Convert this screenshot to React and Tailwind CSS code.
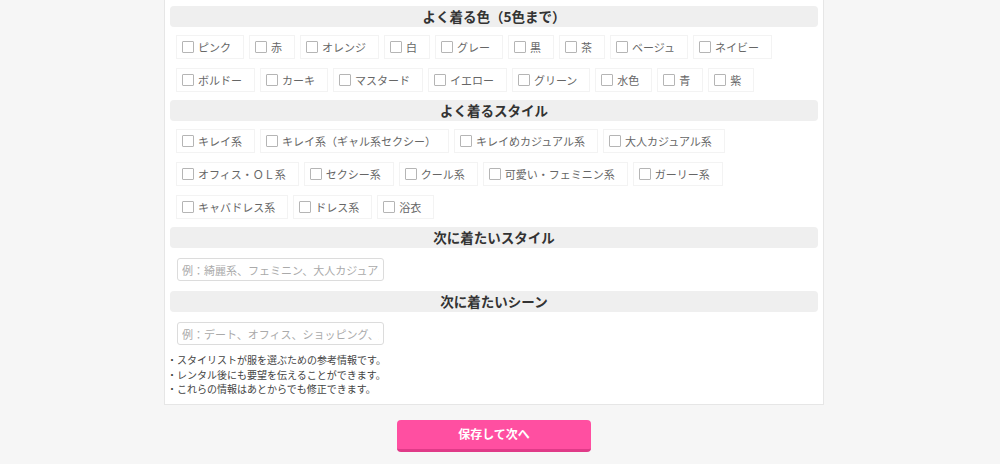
const colors = [
  'ピンク', '赤', 'オレンジ', '白', 'グレー', '黒', '茶', 'ベージュ', 'ネイビー',
  'ボルドー', 'カーキ', 'マスタード', 'イエロー', 'グリーン', '水色', '青', '紫',
]

const styles = [
  'キレイ系', 'キレイ系（ギャル系セクシー）', 'キレイめカジュアル系', '大人カジュアル系',
  'オフィス・ＯＬ系', 'セクシー系', 'クール系', '可愛い・フェミニン系', 'ガーリー系',
  'キャバドレス系', 'ドレス系', '浴衣',
]

const notes = [
  '・スタイリストが服を選ぶための参考情報です。',
  '・レンタル後にも要望を伝えることができます。',
  '・これらの情報はあとからでも修正できます。',
]

function Heading({ children }) {
  return (
    <div className="h-[21px] rounded-[4px] bg-[#efefef] flex items-center justify-center text-[13.5px] font-bold text-[#333]">
      {children}
    </div>
  )
}

function CheckItem({ label }) {
  return (
    <label className="h-[24px] flex items-center gap-[4px] pl-[5px] pr-[12px] border border-[#f3f3f3] text-[11px] text-[#666] whitespace-nowrap">
      <span className="w-[12px] h-[12px] border border-[#b5b5b5] bg-white rounded-[1px] shrink-0" />
      {label}
    </label>
  )
}

function CheckGroup({ items }) {
  return (
    <div className="flex flex-wrap gap-x-[5px] gap-y-[9px] px-[6px] py-[8px]">
      {items.map(i => <CheckItem key={i} label={i} />)}
    </div>
  )
}

function TextField({ placeholder }) {
  return (
    <div className="flex px-[7px] py-[10px]">
      <input
        className="block w-[207px] h-[23px] border border-[#dcdcdc] rounded-[3px] px-[4px] text-[11px] text-[#555] placeholder:text-[#aaa] outline-none bg-white"
        placeholder={placeholder}
      />
    </div>
  )
}

export default function App() {
  return (
    <div
      className="w-full h-[464px] bg-[#f6f6f6] overflow-hidden"
      style={{ fontFamily: '"Noto Sans CJK JP", "Noto Sans", sans-serif' }}
    >
      <div className="w-[988px]">
        <div className="mx-auto w-[660px] bg-white border border-t-0 border-[#e6e6e6] px-[5px] pt-[6px] pb-[7px]">
          <Heading>よく着る色（5色まで）</Heading>
          <CheckGroup items={colors} />
          <Heading>よく着るスタイル</Heading>
          <CheckGroup items={styles} />
          <Heading>次に着たいスタイル</Heading>
          <TextField placeholder="例：綺麗系、フェミニン、大人カジュアル" />
          <Heading>次に着たいシーン</Heading>
          <TextField placeholder="例：デート、オフィス、ショッピング、旅行" />
          <div className="-mt-[2px] -ml-[3px] text-[10px] leading-[14.5px] text-[#444]">
            {notes.map(n => <p key={n}>{n}</p>)}
          </div>
        </div>
        <div className="flex justify-center pt-[15px]">
          <button className="w-[194px] h-[32px] rounded-[4px] bg-[#ff4fa1] border-b-[3px] border-[#e03a88] text-white text-[12px] font-bold">
            保存して次へ
          </button>
        </div>
      </div>
    </div>
  )
}
